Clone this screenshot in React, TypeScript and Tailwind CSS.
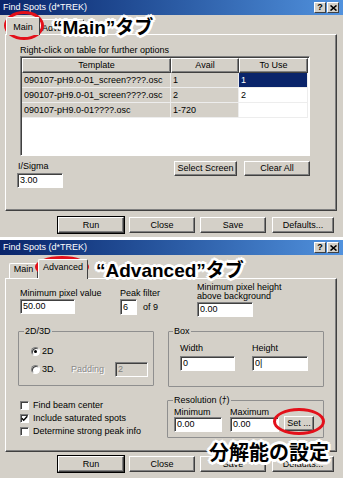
import React from 'react'

const ui = "font-['Liberation_Sans',Arial,sans-serif]"
const jp = "font-['Liberation_Sans','Noto_Sans_CJK_JP',sans-serif]"
const face = 'bg-[#d4d0c8]'
const raisedEdge = 'border border-t-white border-l-white border-r-[#404040] border-b-[#404040]'
const sunken =
  'border border-t-[#808080] border-l-[#808080] border-r-white border-b-white shadow-[inset_1px_1px_0_#404040]'
const halo =
  '[text-shadow:-2px_-2px_0_#fff,0_-2px_0_#fff,2px_-2px_0_#fff,2px_0_0_#fff,2px_2px_0_#fff,0_2px_0_#fff,-2px_2px_0_#fff,-2px_0_0_#fff,0_3px_0_#fff,3px_0_0_#fff,0_-3px_0_#fff,-3px_0_0_#fff]'
const tabOn = `relative z-10 -mb-[1px] ${face} border-t border-l border-r border-t-white border-l-white border-r-[#404040] rounded-t-[2px] text-center text-[9px] leading-[9px]`
const tabOff = `${face} border-t border-l border-r border-t-white border-l-white border-r-[#404040] rounded-t-[2px] text-center text-[9px] leading-[9px]`
const panel = `${face} border border-t-white border-l-white border-r-[#404040] border-b-[#404040] shadow-[inset_-1px_-1px_0_#808080]`
const label = 'text-[9px] leading-[9px] whitespace-nowrap'

function TitleBar() {
  return (
    <div className="h-[15px] flex items-center justify-between pl-[3px] pr-[4px] bg-linear-to-r from-[#0a246a] to-[#5192de]">
      <span className="text-white text-[9px] leading-none">Find Spots (d*TREK)</span>
      <div className="flex gap-[1px]">
        <span
          className={`${raisedEdge} ${face} w-[12px] h-[11px] flex items-center justify-center text-[9px] font-bold leading-none`}
        >
          ?
        </span>
        <span className={`${raisedEdge} ${face} w-[12px] h-[11px] flex items-center justify-center`}>
          <svg width="7" height="6" viewBox="0 0 7 6">
            <path d="M0.5 0.5 L6.5 5.5 M6.5 0.5 L0.5 5.5" stroke="#000" strokeWidth="1.6" />
          </svg>
        </span>
      </div>
    </div>
  )
}

function Btn({ children, className = '', def = false }: { children: React.ReactNode; className?: string; def?: boolean }) {
  return (
    <div
      className={`${raisedEdge} ${face} ${
        def ? 'shadow-[0_0_0_1px_#000,inset_-1px_-1px_0_#808080]' : 'shadow-[inset_-1px_-1px_0_#808080]'
      } flex items-center justify-center text-[9px] leading-none whitespace-nowrap ${className}`}
    >
      {children}
    </div>
  )
}

function Field({ value, className = '', disabled = false }: { value: string; className?: string; disabled?: boolean }) {
  return (
    <div
      className={`${sunken} ${disabled ? `${face} text-[#808080]` : 'bg-white'} flex items-center pl-[2px] text-[9px] leading-none ${className}`}
    >
      {value}
    </div>
  )
}

function ButtonBar({ className = '' }: { className?: string }) {
  return (
    <div className={`flex pl-[58px] ${className}`}>
      <Btn def className="w-[66px] h-[16px]">
        Run
      </Btn>
      <Btn className="ml-[5px] w-[66px] h-[16px]">Close</Btn>
      <Btn className="ml-[5px] w-[66px] h-[16px]">Save</Btn>
      <Btn className="ml-[6px] w-[62px] h-[16px]">Defaults...</Btn>
    </div>
  )
}

const rows = [
  ['090107-pH9.0-01_screen????.osc', '1', '1'],
  ['090107-pH9.0-01_screen????.osc', '2', '2'],
  ['090107-pH9.0-01????.osc', '1-720', ''],
]

function Table() {
  const head = `${raisedEdge} ${face} shadow-[inset_-1px_-1px_0_#808080] flex items-center justify-center text-[9px] leading-none`
  const cell = 'border-r border-b border-[#ededed] flex items-center pl-[2px] text-[9px] leading-none'
  return (
    <div className={`${sunken} bg-white mt-[1px] w-[290px] h-[100px] p-[1px]`}>
      <div className="flex h-[15px]">
        <div className={`${head} w-[149px]`}>Template</div>
        <div className={`${head} w-[68px]`}>Avail</div>
        <div className={`${head} w-[69px]`}>To Use</div>
      </div>
      {rows.map((r, i) => (
        <div key={i} className="flex h-[15px]">
          <div className={`${cell} ${face} w-[149px] whitespace-nowrap`}>{r[0]}</div>
          <div className={`${cell} ${face} w-[68px]`}>{r[1]}</div>
          <div className={`${cell} w-[69px] ${i === 0 ? 'bg-[#0a246a] text-white' : 'bg-white'}`}>{r[2]}</div>
        </div>
      ))}
    </div>
  )
}

function MainDialog() {
  return (
    <div className={`h-[237px] ${face} flex flex-col`}>
      <TitleBar />
      <div className="h-[19px] flex items-end pl-[6px]">
        <div className={`${tabOn} w-[34px] h-[18px] pt-[5px]`}>Main</div>
        <div className={`${tabOff} w-[44px] h-[15px] pt-[4px]`}>Advanced</div>
      </div>
      <div className={`${panel} ml-[5px] w-[332px] h-[177px] pl-[14px] pt-[11px]`}>
        <div className={label}>Right-click on table for further options</div>
        <Table />
        <div className="flex mt-[6px]">
          <div className="ml-[-3px] w-[46px]">
            <div className={`${label} pl-[1px]`}>I/Sigma</div>
            <Field value="3.00" className="mt-[2px] w-[46px] h-[15px]" />
          </div>
          <Btn className="ml-[111px] -mt-[1px] w-[63px] h-[15px]">Select Screen</Btn>
          <Btn className="ml-[7px] -mt-[1px] w-[66px] h-[15px]">Clear All</Btn>
        </div>
      </div>
      <ButtonBar className="mt-[6px]" />
    </div>
  )
}

function Radio({ on = false }: { on?: boolean }) {
  return (
    <span className="w-[9px] h-[9px] rounded-full bg-white border border-t-[#808080] border-l-[#808080] border-r-white border-b-white shadow-[inset_1px_1px_0_#404040] flex items-center justify-center">
      {on && <span className="w-[3px] h-[3px] rounded-full bg-black" />}
    </span>
  )
}

function Check({ on = false, text }: { on?: boolean; text: string }) {
  return (
    <div className="h-[12px] flex items-center">
      <span className={`${sunken} bg-white w-[9px] h-[9px] flex items-center justify-center`}>
        {on && (
          <svg width="7" height="7" viewBox="0 0 7 7">
            <path d="M0.8 3.2 L2.7 5.2 L6.3 1.2" stroke="#000" strokeWidth="1.4" fill="none" />
          </svg>
        )}
      </span>
      <span className={`${label} ml-[4px]`}>{text}</span>
    </div>
  )
}

// group box: the caption sits on the top edge, pulled up by a negative margin
const group = 'mt-[4px] border border-[#8f8f8f] rounded-[1px]'
const caption = `-mt-[5px] w-fit px-[1px] ${face} text-[9px] leading-[9px] whitespace-nowrap`

function AdvancedDialog() {
  return (
    <div className={`h-[238px] ${face} flex flex-col`}>
      <TitleBar />
      <div className="h-[23px] flex items-end pl-[9px]">
        <div className={`${tabOff} w-[29px] h-[15px] pt-[1px]`}>Main</div>
        <div className={`${tabOn} w-[50px] h-[20px] pt-[3px]`}>Advanced</div>
      </div>
      <div className={`${panel} ml-[5px] w-[332px] h-[174px] flex flex-col`}>
        <div className="flex pl-[14px] pt-[4px]">
          <div className="w-[100px] pt-[6px]">
            <div className={label}>Minimum pixel value</div>
            <Field value="50.00" className="mt-[1px] w-[55px] h-[15px]" />
          </div>
          <div className="w-[77px] pt-[6px]">
            <div className={label}>Peak filter</div>
            <div className="flex items-center mt-[1px]">
              <Field value="6" className="w-[17px] h-[16px]" />
              <span className={`${label} ml-[6px]`}>of 9</span>
            </div>
          </div>
          <div>
            <div className="text-[9px] leading-[9px]">
              Minimum pixel height
              <br />
              above background
            </div>
            <Field value="0.00" className="mt-[1px] w-[56px] h-[15px]" />
          </div>
        </div>

        <div className="flex items-start pl-[12px] mt-[10px]">
          <div className={`${group} w-[136px] h-[55px] pl-[12px]`}>
            <div className={`${caption} -ml-[7px]`}>2D/3D</div>
            <div className="flex items-center mt-[11px] h-[9px]">
              <Radio on />
              <span className={`${label} ml-[2px]`}>2D</span>
            </div>
            <div className="flex items-center mt-[6px] h-[15px]">
              <Radio />
              <span className={`${label} ml-[2px] w-[29px]`}>3D.</span>
              <span className={`${label} text-[#8a8a8a] [text-shadow:1px_1px_0_#fff]`}>Padding</span>
              <Field disabled value="2" className="ml-[11px] w-[33px] h-[15px]" />
            </div>
          </div>
          <div className={`${group} ml-[14px] w-[156px] h-[56px] pl-[11px]`}>
            <div className={`${caption} -ml-[7px]`}>Box</div>
            <div className="flex mt-[8px]">
              <div className="w-[72px]">
                <div className={label}>Width</div>
                <Field value="0" className="mt-[3px] w-[55px] h-[15px]" />
              </div>
              <div>
                <div className={label}>Height</div>
                <Field value="0|" className="mt-[3px] w-[56px] h-[15px]" />
              </div>
            </div>
          </div>
        </div>

        <div className="flex items-start pl-[14px] mt-[9px]">
          <div className="w-[147px] pt-[3px] flex flex-col gap-[1px]">
            <Check text="Find beam center" />
            <Check on text="Include saturated spots" />
            <Check text="Determine strong peak info" />
          </div>
          <div className={`${group} w-[157px] h-[38px] pl-[6px]`}>
            <div className={`${caption} -ml-[1px] ${jp}`}>Resolution (ﾅ)</div>
            <div className="flex items-end mt-[3px]">
              <div className="w-[56px]">
                <div className={label}>Minimum</div>
                <Field value="0.00" className="w-[48px] h-[15px]" />
              </div>
              <div className="w-[54px]">
                <div className={label}>Maximum</div>
                <Field value="0.00" className="w-[49px] h-[15px]" />
              </div>
              <Btn className="w-[30px] h-[15px] mb-[1px]">Set ...</Btn>
            </div>
          </div>
        </div>
      </div>
      <ButtonBar className="mt-[4px]" />
    </div>
  )
}

export default function App() {
  return (
    <div className={`relative w-[343px] h-[478px] bg-white overflow-hidden text-black ${ui}`}>
      <MainDialog />
      <div className="h-[3px]" />
      <AdvancedDialog />

      <div className="absolute left-[4px] top-[11px] w-[40px] h-[29px] rounded-[50%] border-[3px] border-[#e3101a]" />
      <div className={`absolute left-[53px] top-[18px] ${jp} font-bold text-[19px] leading-none whitespace-nowrap ${halo}`}>
        “Main”タブ
      </div>

      <div className="absolute left-[35px] top-[256px] w-[54px] h-[22px] rounded-[50%] border-[3px] border-[#e3101a]" />
      <div className={`absolute left-[96px] top-[261px] ${jp} font-bold text-[19px] leading-none whitespace-nowrap ${halo}`}>
        “Advanced”タブ
      </div>

      <div className="absolute left-[273px] top-[408px] w-[52px] h-[27px] rounded-[50%] border-[3px] border-[#e3101a]" />
      <div className={`absolute left-[209px] top-[443px] ${jp} font-bold text-[20px] leading-none whitespace-nowrap ${halo}`}>
        分解能の設定
      </div>
    </div>
  )
}
